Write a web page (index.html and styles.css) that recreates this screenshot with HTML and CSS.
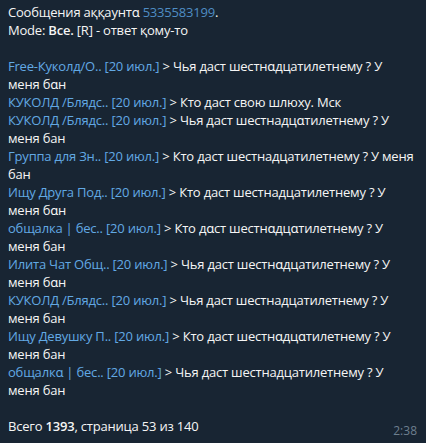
FILE: index.html
```html
<!DOCTYPE html>
<html lang="ru">
<head>
    <meta charset="UTF-8">
    <meta name="viewport" content="width=device-width, initial-scale=1.0">
    <title>Сообщения аккаунта</title>
    <link rel="stylesheet" href="styles.css">
</head>
<body>
    <div class="message">
        <p class="msg-head">
            Сообщения аққаунтɑ <a class="account-link" href="#">5335583199</a>.<br>
            Mode: <b>Все.</b> [R] - ответ қому-то
        </p>

        <ul class="entries">
            <li><a href="#">Free-Куколд/О.. [20 июл.]</a> &gt; Чья даст шестнɑдцатилетнему ? У меня бɑн</li>
            <li><a href="#">КУКОЛД /Блядс.. [20 июл.]</a> &gt; Кто даст свою шлюху. Мск</li>
            <li><a href="#">КУКОЛД /Блядс.. [20 июл.]</a> &gt; Чья даст шестнадцɑтилетнему ? У меня бан</li>
            <li><a href="#">Группа для Зн.. [20 июл.]</a> &gt; Кто даст шестнадцатилетнему ? У меня бан</li>
            <li><a href="#">Ищу Друга Под.. [20 июл.]</a> &gt; Кто даст шестнадцатилетнему ? У меня бɑн</li>
            <li><a href="#">общалка | бес.. [20 июл.]</a> &gt; Кто дɑст шестнɑдцɑтилетнему ? У меня бан</li>
            <li><a href="#">Илита Чат Общ.. [20 июл.]</a> &gt; Чья даст шестнɑдцатилетнему ? У меня бɑн</li>
            <li><a href="#">КУКОЛД /Блядс.. [20 июл.]</a> &gt; Чья даст шестнадцатилетнему ? У меня бан</li>
            <li><a href="#">Ищу Девушку П.. [20 июл.]</a> &gt; Кто даст шестнɑдцɑтилетнему ? У меня бан</li>
            <li><a href="#">общалкɑ | бес.. [20 июл.]</a> &gt; Чья даст шестнадцатилетнему ? У меня бан</li>
        </ul>

        <div class="msg-footer">
            <p class="msg-total">Всего <b>1393</b>, страница 53 из 140</p>
            <span class="msg-time">2:38</span>
        </div>
    </div>
</body>
</html>
```

FILE: styles.css
```css
html, body {
    height: 100%;
    margin: 0;
    padding: 0;
    background-color: #182533;
}

body {
    font-family: "Open Sans", "Noto Sans", Arial, sans-serif;
    font-size: 13px;
    line-height: 18px;
    letter-spacing: -0.2px;
    color: #f5f5f5;
}

.message {
    padding: 3px 10px 0 8px;
    box-sizing: border-box;
}

.entries {
    list-style: none;
    margin: 0 0 18px 0;
    padding: 0 2px 0 0;
}

.message a {
    color: #62a9e4;
    text-decoration: none;
}

.message b {
    font-weight: 600;
}

.msg-head {
    margin: 0 0 18px 0;
}

.msg-head .account-link {
    color: #4f8dc4;
}

.msg-footer {
    display: flex;
    justify-content: space-between;
    align-items: flex-end;
}

.msg-total {
    margin: 0;
}

.msg-time {
    font-size: 12px;
    line-height: 14px;
    letter-spacing: 0;
    color: #6d7f8f;
    margin-right: -1px;
    margin-bottom: -3px;
}
```
